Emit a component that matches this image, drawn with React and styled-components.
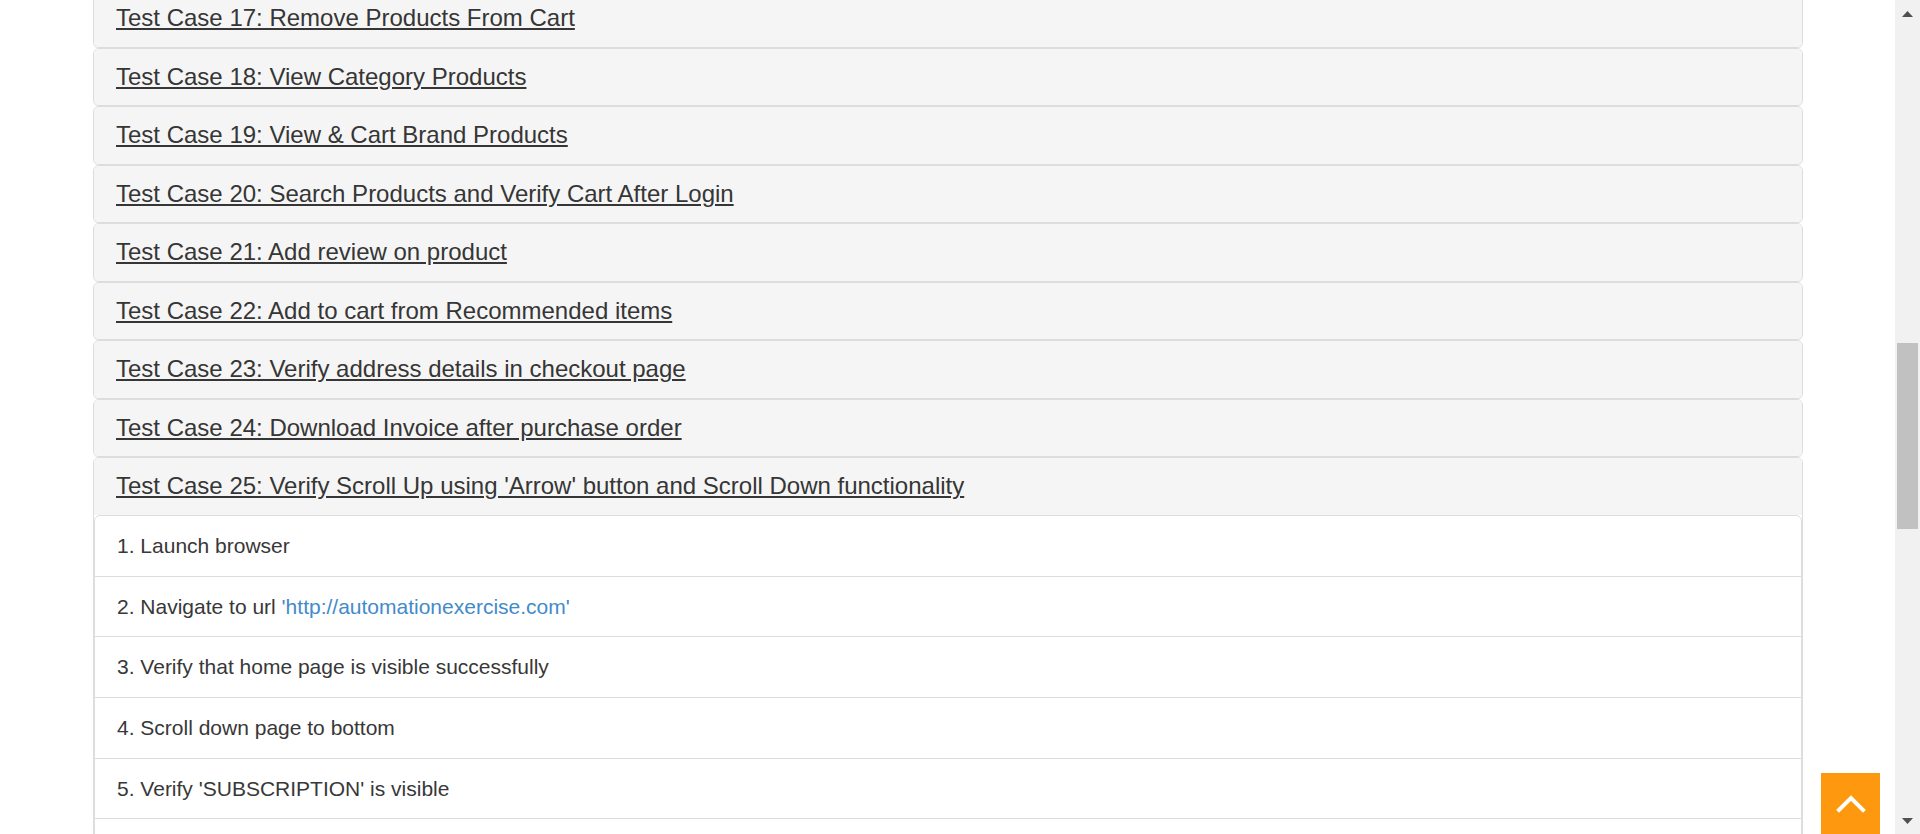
import React from "react";
import styled, { createGlobalStyle } from "styled-components";

const GlobalStyle = createGlobalStyle`
  html, body {
    margin: 0;
    padding: 0;
    overflow: hidden;
    background: #fff;
  }
  body {
    font-family: "Liberation Sans", Arial, sans-serif;
    color: #333;
  }
`;

const Screen = styled.div`
  display: flex;
  width: 1920px;
  height: 834px;
  overflow: hidden;
`;

const Viewport = styled.main`
  flex: 1;
  overflow: hidden;
`;

// scrolled page: the first heading sits partly above the fold
const Container = styled.div`
  max-width: 1755px;
  box-sizing: border-box;
  padding: 0 22.5px;
  margin: -10.7px auto 0;
`;

const PanelGroup = styled.div`
  display: flex;
  flex-direction: column;
`;

const Panel = styled.div`
  background: #fff;
  border: 1px solid #ddd;
  border-radius: 6px;
  box-shadow: 0 1px 1px rgba(0, 0, 0, 0.05);
  overflow: hidden;
`;

const PanelHeading = styled.div`
  background: #f5f5f5;
  padding: 15px 22.5px;
`;

const PanelTitle = styled.h4`
  margin: 0;
  font-size: 24px;
  font-weight: 400;
  line-height: 26.5px;

  a {
    color: #363636;
    text-decoration: underline;
    text-underline-offset: 2px;
  }
`;

const ListGroup = styled.ul`
  list-style: none;
  margin: 0;
  padding: 0;
`;

const ListItem = styled.li`
  padding: 15px 22.5px;
  font-size: 21px;
  line-height: 29.7px;
  color: #383838;
  border: 1px solid #ddd;
  margin-bottom: -1px;

  &:first-child {
    border-top-left-radius: 6px;
    border-top-right-radius: 6px;
  }

  a {
    color: #428bca;
    text-decoration: none;
  }
`;

const Scrollbar = styled.div`
  width: 25px;
  flex: none;
  background: #f1f1f1;
  display: flex;
  flex-direction: column;
`;

const ArrowButton = styled.div`
  height: 27px;
  display: flex;
  align-items: center;
  justify-content: center;
`;

const Track = styled.div`
  flex: 1;
  display: flex;
  flex-direction: column;
`;

const Thumb = styled.div`
  margin: ${(p) => p.$offset}px 2px 0;
  height: ${(p) => p.$size}px;
  background: #c1c1c1;
`;

const ScrollUp = styled.a`
  position: fixed;
  right: 40px;
  bottom: 0;
  width: 59px;
  height: 61px;
  background: #fe980f;
  display: flex;
  align-items: center;
  justify-content: center;
`;

const Triangle = ({ up }) => (
  <svg width="11" height="6" viewBox="0 0 11 6">
    <polygon points={up ? "0,6 11,6 5.5,0" : "0,0 11,0 5.5,6"} fill="#505050" />
  </svg>
);

const cases = [
  "Test Case 17: Remove Products From Cart",
  "Test Case 18: View Category Products",
  "Test Case 19: View & Cart Brand Products",
  "Test Case 20: Search Products and Verify Cart After Login",
  "Test Case 21: Add review on product",
  "Test Case 22: Add to cart from Recommended items",
  "Test Case 23: Verify address details in checkout page",
  "Test Case 24: Download Invoice after purchase order",
];

const steps = [
  "1. Launch browser",
  "URL",
  "3. Verify that home page is visible successfully",
  "4. Scroll down page to bottom",
  "5. Verify 'SUBSCRIPTION' is visible",
  "6. Click on arrow at bottom right side to move upward",
];

export default function App() {
  return (
    <>
      <GlobalStyle />
      <Screen>
        <Viewport>
          <Container>
            <PanelGroup>
              {cases.map((title) => (
                <Panel key={title}>
                  <PanelHeading>
                    <PanelTitle>
                      <a href="#">{title}</a>
                    </PanelTitle>
                  </PanelHeading>
                </Panel>
              ))}
              <Panel>
                <PanelHeading>
                  <PanelTitle>
                    <a href="#">
                      Test Case 25: Verify Scroll Up using 'Arrow' button and Scroll Down functionality
                    </a>
                  </PanelTitle>
                </PanelHeading>
                <ListGroup>
                  {steps.map((s) =>
                    s === "URL" ? (
                      <ListItem key={s}>
                        2. Navigate to url{" "}
                        <a href="#">'http://automationexercise.com'</a>
                      </ListItem>
                    ) : (
                      <ListItem key={s}>{s}</ListItem>
                    )
                  )}
                </ListGroup>
              </Panel>
            </PanelGroup>
          </Container>
        </Viewport>
        <Scrollbar>
          <ArrowButton>
            <Triangle up />
          </ArrowButton>
          <Track>
            <Thumb $offset={316} $size={186} />
          </Track>
          <ArrowButton>
            <Triangle />
          </ArrowButton>
        </Scrollbar>
      </Screen>
      <ScrollUp href="#">
        <svg width="30" height="20" viewBox="0 0 30 20">
          <polyline
            points="3,16 15,4 27,16"
            fill="none"
            stroke="#fff"
            strokeWidth="4"
            strokeLinecap="square"
          />
        </svg>
      </ScrollUp>
    </>
  );
}
